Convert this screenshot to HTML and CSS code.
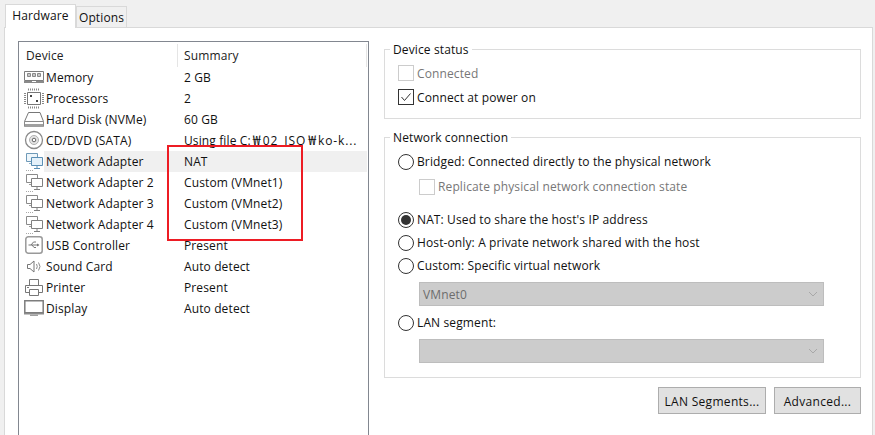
FILE: index.html
```html
<!DOCTYPE html>
<html lang="en">
<head>
<meta charset="utf-8">
<title>Virtual Machine Settings</title>
<link rel="stylesheet" href="styles.css">
</head>
<body>
<div class="dialog">
  <div class="tabs">
    <div class="tab active">Hardware</div>
    <div class="tab">Options</div>
  </div>
  <div class="page">
    <div class="devices">
      <div class="row head"><span class="c1 th">Device</span><span class="c2 th">Summary</span></div>
      <div class="row"><span class="c1"><svg class="ic" viewBox="0 0 20 21"><path d="M.5 4.500h19v9H.5z" fill="#fff" stroke="#7d7d7d"/><path d="M3.500 6.500h3v3h-3zM8.500 6.500h3v3h-3zM13.500 6.500h3v3h-3z" fill="#c8c8c8" stroke="#8a8a8a"/><path d="M0 14h8v1h4v-1h8v2H0z" fill="#8a8a8a"/></svg><span class="lb">Memory</span></span><span class="c2">2 GB</span></div>
      <div class="row"><span class="c1"><svg class="ic" viewBox="0 0 20 21"><path d="M3.500 4.500h13v12h-13z" fill="#fff" stroke="#777"/><path d="M4 1.500h12M4 19.500h12M1 5v11M19 5v11" stroke="#888" stroke-dasharray="1 1" stroke-width="2" fill="none"/><path d="M6 7h2v2H6zM12 12h2v2h-2z" fill="#444"/></svg><span class="lb">Processors</span></span><span class="c2">2</span></div>
      <div class="row"><span class="c1"><svg class="ic" viewBox="0 0 20 21"><path d="M.5 12.500 4.500 3.500h11.500l3.500 9z" fill="#fff" stroke="#777"/><path d="M.5 12.500h19v5H.5z" fill="#fff" stroke="#8a8a8a"/><path d="M1 15h18v3H1z" fill="#a0a0a0"/></svg><span class="lb">Hard Disk (NVMe)</span></span><span class="c2">60 GB</span></div>
      <div class="row"><span class="c1"><svg class="ic" viewBox="0 0 20 21"><circle cx="10" cy="10" r="8.500" fill="#fff" stroke="#8a8a8a" stroke-width="1.300"/><circle cx="10" cy="10" r="4.500" fill="#e4e4e4" stroke="#b0b0b0"/><circle cx="10" cy="10" r="1.800" fill="#fff" stroke="#666"/></svg><span class="lb">CD/DVD (SATA)</span></span><span class="c2">Using file C:<span class="won">₩</span><span class="run">02_ISO</span><span class="won">₩</span><span class="run">ko-k...</span></span></div>
      <div class="row sel"><span class="c1"><svg class="ic" viewBox="0 0 20 21"><use href="#net-blue"/></svg><span class="lb">Network Adapter</span></span><span class="c2">NAT</span></div>
      <div class="row"><span class="c1"><svg class="ic" viewBox="0 0 20 21"><use href="#net"/></svg><span class="lb">Network Adapter 2</span></span><span class="c2">Custom (VMnet1)</span></div>
      <div class="row"><span class="c1"><svg class="ic" viewBox="0 0 20 21"><use href="#net"/></svg><span class="lb">Network Adapter 3</span></span><span class="c2">Custom (VMnet2)</span></div>
      <div class="row"><span class="c1"><svg class="ic" viewBox="0 0 20 21"><use href="#net"/></svg><span class="lb">Network Adapter 4</span></span><span class="c2">Custom (VMnet3)</span></div>
      <div class="row"><span class="c1"><svg class="ic" viewBox="0 0 20 21"><rect x="1.800" y="1.800" width="16.400" height="16.400" rx="2.500" fill="#fff" stroke="#999" stroke-width="1.500"/><path d="M4.500 10h10M7 10l2.500-3H12M8 10l2 2.500h2" fill="none" stroke="#777"/><path d="M15.500 10l-2.500-1.500v3z" fill="#777"/></svg><span class="lb">USB Controller</span></span><span class="c2">Present</span></div>
      <div class="row"><span class="c1"><svg class="ic" viewBox="0 0 20 21"><path d="M3.500 8.500h2.500l4-3.500v11l-4-3.500H3.500z" fill="#fff" stroke="#777"/><path d="M12.500 8q1.500 2.500 0 5M14.500 6.500q3 4 0 8" fill="none" stroke="#8a8a8a"/></svg><span class="lb">Sound Card</span></span><span class="c2">Auto detect</span></div>
      <div class="row"><span class="c1"><svg class="ic" viewBox="0 0 20 21"><path d="M5.500 8.500v-6h9v6" fill="#fff" stroke="#777"/><path d="M1.500 8.500h17v7h-17z" fill="#fff" stroke="#777"/><path d="M3 10.500h2" stroke="#777"/><path d="M5.500 12.500h9v6h-9z" fill="#fff" stroke="#777"/></svg><span class="lb">Printer</span></span><span class="c2">Present</span></div>
      <div class="row"><span class="c1"><svg class="ic" viewBox="0 0 20 21"><path d="M.8 2.800h18.400v12H.8z" fill="#fff" stroke="#7d7d7d" stroke-width="1.500"/><path d="M0 15h20v1.500H0z" fill="#8a8a8a"/><path d="M6 16.500h8V18H6z" fill="#a0a0a0"/></svg><span class="lb">Display</span></span><span class="c2">Auto detect</span></div>
    </div>
    <div class="side">
      <fieldset class="group status">
        <legend>Device status</legend>
        <label class="opt dim"><span class="check off"></span>Connected</label>
        <label class="opt"><span class="check"><svg viewBox="0 0 14 14"><path d="M2.500 7 5.500 10.500 11.500 3.500" fill="none" stroke="#333"/></svg></span>Connect at power on</label>
      </fieldset>
      <fieldset class="group net">
        <legend>Network connection</legend>
        <label class="opt"><span class="radio"></span>Bridged: Connected directly to the physical network</label>
        <label class="opt dim sub"><span class="check off"></span>Replicate physical network connection state</label>
        <label class="opt nat"><span class="radio on"></span>NAT: Used to share the host's IP address</label>
        <label class="opt"><span class="radio"></span>Host-only: A private network shared with the host</label>
        <label class="opt"><span class="radio"></span>Custom: Specific virtual network</label>
        <div class="select">VMnet0<svg viewBox="0 0 10 6"><path d="M1 1l4 4 4-4" fill="none" stroke="#a8a8a8"/></svg></div>
        <label class="opt lan"><span class="radio"></span>LAN segment:</label>
        <div class="select"><svg viewBox="0 0 10 6"><path d="M1 1l4 4 4-4" fill="none" stroke="#a8a8a8"/></svg></div>
      </fieldset>
      <div class="buttons">
        <button class="btn wide">LAN Segments...</button>
        <button class="btn">Advanced...</button>
      </div>
    </div>
    <div class="mark"></div>
  </div>
</div>
<svg class="defs" width="0" height="0"><defs>
<g id="net"><path d="M2.500 2.500h11v8h-11z" fill="#fff" stroke="#8a8a8a"/><path d="M5 12.500h5" stroke="#9a9a9a"/><path d="M7.500 6.500h11v8h-11z" fill="#fff" stroke="#808080"/><path d="M13 15v2M10 17.500h6" stroke="#808080"/><path d="M2 19.500h8" stroke="#aaa" stroke-dasharray="1 1"/></g>
<g id="net-blue"><path d="M2.500 2.500h11v8h-11z" fill="#eef6fb" stroke="#6f9ab8"/><path d="M5 12.500h5" stroke="#8fb0c6"/><path d="M7.500 6.500h11v8h-11z" fill="#e4f1fa" stroke="#5a8fb5"/><path d="M13 15v2M10 17.500h6" stroke="#5a8fb5"/><path d="M2 19.500h8" stroke="#aaa" stroke-dasharray="1 1"/></g>
</defs></svg>
</body>
</html>
```
FILE: styles.css
```css
* { box-sizing: border-box; }
html, body { margin: 0; height: 100%; overflow: hidden; }
body { width: 875px; height: 435px; background: #f0f0f0; font-family: "Open Sans", sans-serif; font-size: 12px; letter-spacing: .12px; color: #111; }
.dialog { height: 435px; width: 873px; padding-left: 4px; display: flex; flex-direction: column; }
.tabs { flex: none; display: flex; height: 27px; align-items: flex-end; padding-left: 1px; position: relative; z-index: 1; }
.tab { height: 21px; width: 51px; border: 1px solid #d9d9d9; border-bottom: 0; background: #f0f0f0; text-align: center; line-height: 21px; }
.tab.active { width: 71px; height: 24px; margin-bottom: -1px; background: #fff; border-right-color: #d9d9d9; line-height: 22px; }
.page { flex: 1; min-height: 0; background: #fff; border: 1px solid #d9d9d9; border-bottom: 0; display: flex; padding: 13px 0 0 13px; position: relative; }
.devices { flex: none; width: 351px; height: 400px; border: 1px solid #828790; border-bottom: 0; padding-top: 2px; }
.row { display: flex; height: 21px; line-height: 21px; white-space: nowrap; }
.row.head { height: 23px; line-height: 24px; color: #222; }
.c1 { flex: none; width: 159px; display: flex; padding-left: 5px; }
.c2 { flex: 1; padding-left: 6px; }
.won { display: inline-block; width: 12px; text-align: center; font-family: "Noto Sans CJK KR", sans-serif; font-size: 14px; line-height: 1; }
.run { letter-spacing: .85px; }
.lb { flex: 1; padding-left: 2px; }
.th { border-right: 1px solid #e5e5e5; height: 23px; }
.head .c1 { padding-left: 7px; }
.head .c2 { flex: none; width: 189px; }
.ic { width: 20px; height: 21px; flex: none; display: block; }
.sel .lb, .sel .c2 { background: #f0f0f0; }
.sel .c2 { flex: none; width: 189px; }
.side { flex: none; margin: -1px 0 0 15px; width: 477px; display: flex; flex-direction: column; }
.group { flex: none; margin: 0; border: 1px solid #dcdcdc; padding: 0; min-width: 0; display: flex; flex-direction: column; }
.group legend { padding: 0 3px; margin-left: 5px; line-height: 18px; transform: translateY(1px); }
.status { height: 79px; padding-top: 3px; }
.net { height: 250px; margin-top: 9px; padding-top: 4px; }
.opt { display: flex; align-items: center; height: 23px; margin-left: 13px; white-space: nowrap; }
.status .opt { height: 24px; }
.dim { color: #777; }
.check { flex: none; width: 16px; height: 16px; border: 1px solid #333; margin-right: 3px; background: #fff; }
.check svg { display: block; width: 14px; height: 14px; }
.check.off { border-color: #ccc; }
.radio { flex: none; width: 16px; height: 16px; border: 1px solid #333; border-radius: 50%; margin-right: 3px; background: #fff; position: relative; }
.radio.on::after { content: ""; position: absolute; inset: 2px; border-radius: 50%; background: #333; }
.sub { margin-left: 34px; margin-top: 2px; }
.nat { margin-top: 10px; }
.select { flex: none; height: 24px; width: 405px; margin: 5px 0 0 34px; background: #ccc; border: 1px solid #bdbdbd; color: #6d6d6d; padding-left: 3px; display: flex; align-items: center; }
.select svg { width: 10px; height: 6px; margin: 0 5px 0 auto; }
.lan { margin-top: 5px; }
.buttons { flex: none; display: flex; justify-content: flex-end; gap: 8px; margin-top: 9px; }
.btn { height: 27px; width: 87px; font: inherit; letter-spacing: .3px; background: #e1e1e1; border: 1px solid #adadad; padding: 1px 0 0; color: #111; }
.btn.wide { width: 108px; }
.mark { position: absolute; left: 162px; top: 117px; width: 136px; height: 96px; border: 2px solid #ed1c24; }
.defs { position: absolute; }
```
